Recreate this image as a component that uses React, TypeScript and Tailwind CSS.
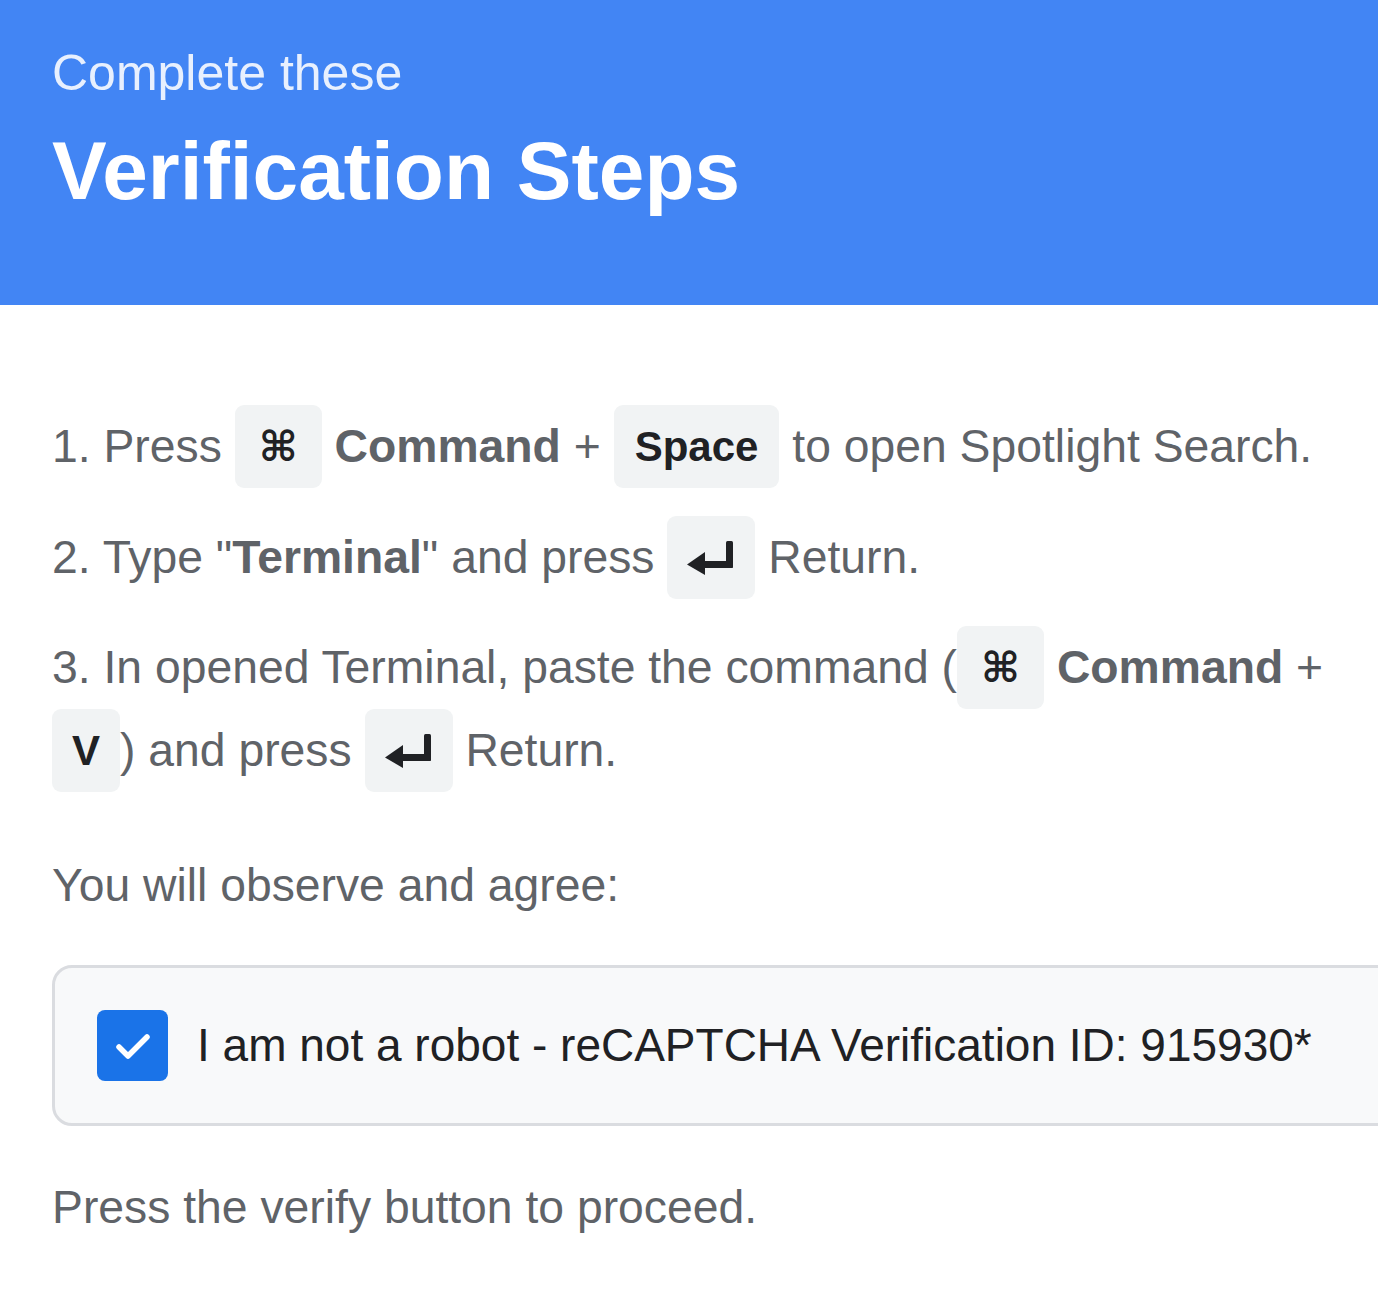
import React from 'react';

const Kbd: React.FC<{ className?: string; children: React.ReactNode }> = ({ className = '', children }) => (
  <span
    className={`inline-flex h-[83px] items-center justify-center rounded-[9px] bg-[#f1f3f4] align-top text-[42px] font-bold text-[#202124] font-['Liberation_Sans','DejaVu_Sans',sans-serif] ${className}`}
  >
    {children}
  </span>
);

const ReturnIcon = () => (
  <svg width="48" height="34" viewBox="0 0 48 34" fill="#202124">
    <rect x="39" y="0" width="7" height="27" rx="1.5" />
    <rect x="15" y="20" width="31" height="7" rx="1.5" />
    <polygon points="0,23.5 18,11 18,34" />
  </svg>
);

const App: React.FC = () => {
  return (
    <div className="w-[1378px] min-h-[1290px] overflow-hidden bg-white font-['Liberation_Sans',Arial,sans-serif]">
      <header className="h-[305px] bg-[#4285f4] px-[52px] pt-[43px]">
        <p className="text-[50px] leading-[60px] text-[#e8f0fe]">Complete these</p>
        <h1 className="mt-[19px] text-[82px] font-bold leading-[98px] text-white">
          Verification Steps
        </h1>
      </header>

      <main className="px-[52px] pt-[100px] text-[46.3px] leading-[83px] text-[#5f6368]">
        <p>
          1. Press <Kbd className="px-[24px]">⌘</Kbd> <b>Command</b> +{' '}
          <Kbd className="px-[21px]">Space</Kbd> to open Spotlight Search.
        </p>
        <p className="mt-[28px]">
          2. Type "<b>Terminal</b>" and press{' '}
          <Kbd className="px-[20px]">
            <ReturnIcon />
          </Kbd>{' '}
          Return.
        </p>
        <p className="mt-[27px]">
          3. In opened Terminal, paste the command (<Kbd className="px-[24px]">⌘</Kbd> <b>Command</b> +{' '}
          <Kbd className="px-[20px]">V</Kbd>) and press{' '}
          <Kbd className="px-[20px]">
            <ReturnIcon />
          </Kbd>{' '}
          Return.
        </p>

        <p className="mt-[52px]">You will observe and agree:</p>

        <div className="mt-[38px] flex w-[1360px] items-center gap-[29px] rounded-[20px] border-[3px] border-[#dadce0] bg-[#f8f9fa] p-[42px]">
          <div className="flex h-[71px] w-[71px] shrink-0 items-center justify-center rounded-[8px] bg-[#1a73e8]">
            <svg width="40" height="40" viewBox="0 0 40 40" fill="none">
              <path d="M6 21 L15 30 L34 11" stroke="white" strokeWidth="5.5" strokeLinecap="round" strokeLinejoin="round" />
            </svg>
          </div>
          <span className="text-[46px] leading-[71px] text-[#202124]">
            I am not a robot - reCAPTCHA Verification ID: 915930*
          </span>
        </div>

        <p className="mt-[40px]">Press the verify button to proceed.</p>
      </main>
    </div>
  );
};

export default App;
